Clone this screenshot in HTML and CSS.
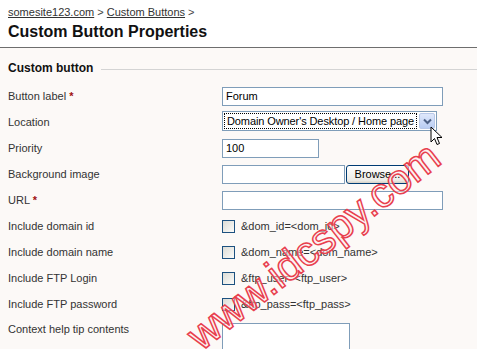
FILE: index.html
```html
<!DOCTYPE html>
<html lang="en">
<head>
  <meta charset="UTF-8">
  <meta name="viewport" content="width=device-width, initial-scale=1.0">
  <title>Custom Button Properties</title>
  <link rel="stylesheet" href="styles.css">
</head>
<body>
  <div id="header">
    <div class="breadcrumb">
      <a href="#">somesite123.com</a> &gt; <a href="#">Custom Buttons</a> &gt;
    </div>
    <h1>Custom Button Properties</h1>
  </div>

  <div id="content">
    <div class="section-title">Custom button</div>

    <div class="form">
      <div class="row">
        <label>Button label <span class="req">*</span></label>
        <div class="field"><div class="input wide">Forum</div></div>
      </div>
      <div class="row">
        <label>Location</label>
        <div class="field">
          <div class="select">
            <span class="select-text">Domain Owner's Desktop / Home page</span>
            <span class="select-btn">
              <svg width="9" height="7" viewBox="0 0 9 7"><path d="M1 1.5 L4.5 5 L8 1.5" fill="none" stroke="#4d6185" stroke-width="2"/></svg>
            </span>
          </div>
        </div>
      </div>
      <div class="row">
        <label>Priority</label>
        <div class="field"><div class="input short">100</div></div>
      </div>
      <div class="row">
        <label>Background image</label>
        <div class="field">
          <div class="input file"></div>
          <div class="browse">Browse...</div>
        </div>
      </div>
      <div class="row">
        <label>URL <span class="req">*</span></label>
        <div class="field"><div class="input wide"></div></div>
      </div>
      <div class="row">
        <label>Include domain id</label>
        <div class="field"><span class="checkbox"></span>&amp;dom_id=&lt;dom_id&gt;</div>
      </div>
      <div class="row">
        <label>Include domain name</label>
        <div class="field"><span class="checkbox"></span>&amp;dom_name=&lt;dom_name&gt;</div>
      </div>
      <div class="row">
        <label>Include FTP Login</label>
        <div class="field"><span class="checkbox"></span>&amp;ftp_user=&lt;ftp_user&gt;</div>
      </div>
      <div class="row">
        <label>Include FTP password</label>
        <div class="field"><span class="checkbox"></span>&amp;ftp_pass=&lt;ftp_pass&gt;</div>
      </div>
      <div class="row top">
        <label>Context help tip contents</label>
        <div class="field"><div class="textarea"></div></div>
      </div>
    </div>
  </div>

  <svg class="cursor" width="13" height="21" viewBox="0 0 13 21">
    <path d="M1 1 L1 16 L4.5 12.5 L7 18.5 L9.5 17.5 L7 11.5 L12 11.5 Z" fill="#fff" stroke="#000" stroke-width="1"/>
  </svg>

  <div class="watermark">www.idcspy.com</div>
</body>
</html>
```

FILE: styles.css
```css
body {
  margin: 0;
  font-family: "Liberation Sans", Arial, sans-serif;
  font-size: 11px;
  color: #333;
  background: #fcf9f7;
  overflow: hidden;
}

#header {
  background: #fff;
  padding: 5px 8px 5px;
  border-bottom: 1px solid #6e6e6e;
}

.breadcrumb {
  line-height: 14px;
  color: #444;
}

.breadcrumb a {
  color: #333;
  text-decoration: underline;
}

h1 {
  margin: 3px 0 0;
  font-size: 16px;
  line-height: 20px;
  color: #111;
}

#content {
  padding: 13px 0 0 8px;
}

.section-title {
  display: flex;
  align-items: center;
  gap: 8px;
  font-size: 12px;
  font-weight: bold;
  line-height: 14px;
  color: #111;
  margin-bottom: 8px;
}

.section-title::after {
  content: "";
  flex: 1;
  border-top: 1px solid #d4d4d4;
  margin-top: 3px;
}

.row {
  display: grid;
  grid-template-columns: 214px 1fr;
  align-items: center;
  height: 26px;
}

.row.top {
  align-items: start;
  padding-top: 6px;
}

.req {
  color: #a01010;
  font-weight: bold;
}

.field {
  display: flex;
  align-items: center;
  color: #333;
}

.input {
  box-sizing: border-box;
  height: 19px;
  border: 1px solid #7f9db9;
  background: #fff;
  color: #000;
  padding: 2px 3px;
  line-height: 13px;
}

.input.wide {
  width: 221px;
}

.input.short {
  width: 97px;
}

.input.file {
  width: 123px;
}

.browse {
  box-sizing: border-box;
  width: 63px;
  height: 19px;
  margin-left: 1px;
  border: 1px solid #003c74;
  border-radius: 3px;
  background: linear-gradient(#fff, #ecebe6 85%, #d6d0c5);
  color: #000;
  text-align: center;
  line-height: 16px;
}

.select {
  box-sizing: border-box;
  width: 215px;
  height: 20px;
  margin-top: -2px;
  border: 1px solid #7f9db9;
  background: #fff;
  display: flex;
  align-items: center;
  padding: 1px;
  gap: 2px;
}

.select-text {
  flex: 1;
  color: #000;
  border: 1px dotted #000;
  line-height: 14px;
  padding-left: 2px;
  white-space: nowrap;
  overflow: hidden;
  letter-spacing: -0.1px;
}

.select-btn {
  flex: none;
  box-sizing: border-box;
  width: 16px;
  height: 16px;
  border: 1px solid #b8c8e8;
  border-radius: 2px;
  background: linear-gradient(#dfe8fb, #b9cdf3);
  display: flex;
  align-items: center;
  justify-content: center;
}

.checkbox {
  box-sizing: border-box;
  width: 13px;
  height: 13px;
  border: 1px solid #1c5180;
  background: linear-gradient(135deg, #dcdcd6, #fbfbf9);
  margin-right: 6px;
}

.textarea {
  box-sizing: border-box;
  width: 128px;
  height: 40px;
  border: 1px solid #7f9db9;
  background: #fff;
}

.cursor {
  position: absolute;
  left: 430px;
  top: 126px;
}

.watermark {
  position: absolute;
  left: 160px;
  top: 222px;
  font-family: "Liberation Sans", Arial, sans-serif;
  font-size: 42px;
  line-height: 48px;
  color: rgba(255, 235, 238, 0.5);
  -webkit-text-stroke: 1.5px #e8404e;
  transform: rotate(-38deg);
  white-space: nowrap;
  pointer-events: none;
}
```
